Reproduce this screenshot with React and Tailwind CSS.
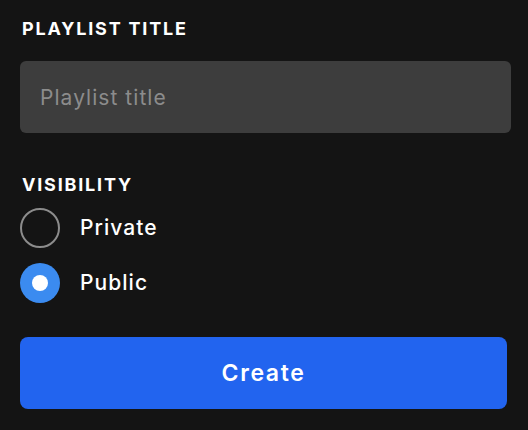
import React, { useState } from 'react';

const App = () => {
  const [title, setTitle] = useState('');
  const [visibility, setVisibility] = useState('public');

  const options = [
    { value: 'private', label: 'Private' },
    { value: 'public', label: 'Public' },
  ];

  return (
    <div className="w-[528px] h-[430px] bg-[#141414] text-white px-5 pt-[17px]" style={{ fontFamily: 'Inter, "Noto Sans", sans-serif' }}>
      {/* Title field */}
      <label className="block h-[24px] leading-[24px] text-[18px] font-bold tracking-[0.1em] pl-[2px]">PLAYLIST TITLE</label>
      <input
        type="text"
        value={title}
        onChange={(e) => setTitle(e.target.value)}
        placeholder="Playlist title"
        className="mt-[20px] block w-[491px] h-[72px] rounded-md bg-[#3d3d3d] px-5 text-[21px] tracking-[0.05em] text-white placeholder:text-[#8c8c8c] outline-none"
      />

      {/* Visibility */}
      <div className="mt-[40px] h-[24px] leading-[24px] text-[18px] font-bold tracking-[0.1em] pl-[2px]">VISIBILITY</div>
      <div className="mt-[11px] flex flex-col gap-[15px]">
        {options.map((o) => (
          <button key={o.value} onClick={() => setVisibility(o.value)} className="flex items-center gap-5 h-10 text-left">
            {visibility === o.value ? (
              <span className="w-10 h-10 rounded-full bg-[#3b8bf0] flex items-center justify-center">
                <span className="w-4 h-4 rounded-full bg-white" />
              </span>
            ) : (
              <span className="w-10 h-10 rounded-full border-2 border-[#8c8c8c]" />
            )}
            <span className="text-[21px] font-medium tracking-[0.05em]">{o.label}</span>
          </button>
        ))}
      </div>

      <button className="mt-[34px] w-[487px] h-[72px] rounded-lg bg-[#2264ef] text-[23px] font-semibold tracking-[0.07em]">Create</button>
    </div>
  );
};

export default App;
